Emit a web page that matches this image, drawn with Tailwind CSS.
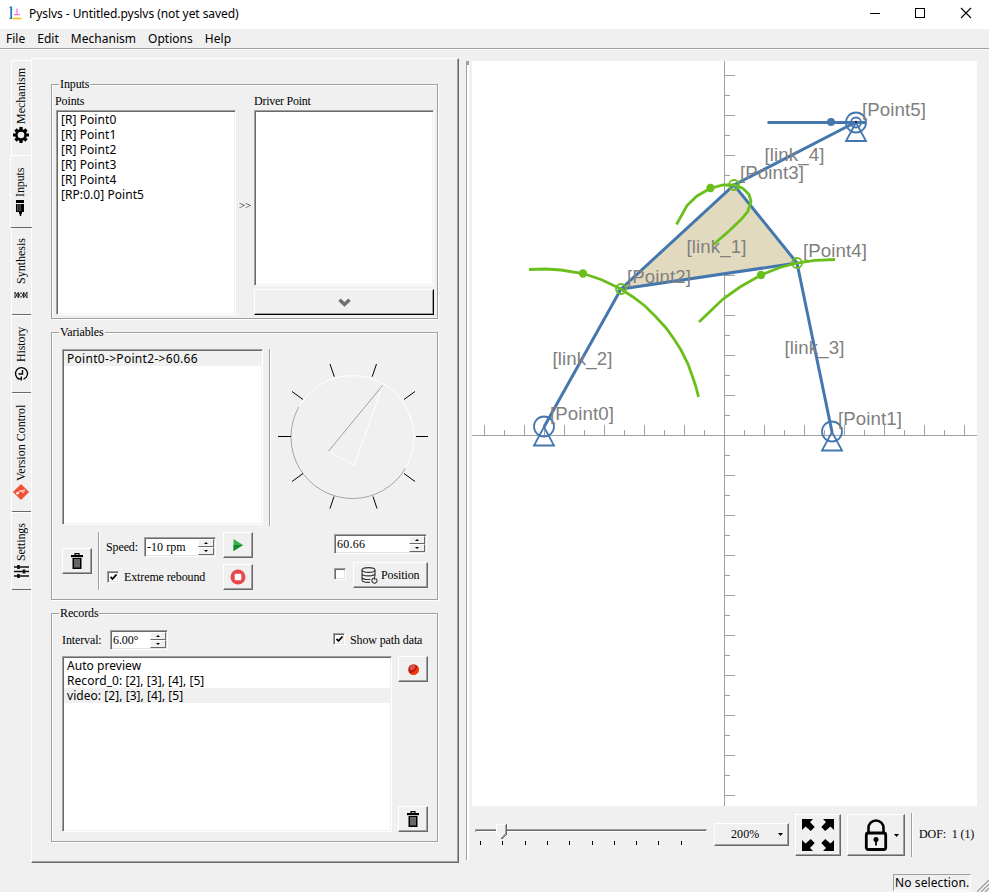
<!DOCTYPE html>
<html lang="en">
<head>
<meta charset="utf-8">
<title>Pyslvs</title>
<script src="https://cdn.jsdelivr.net/npm/@tailwindcss/browser@4"></script>
</head>
<body class="w-[989px] h-[892px] overflow-hidden bg-[#f0f0f0] text-black flex flex-col font-['Liberation_Serif',serif] text-[12px] leading-[15px] tracking-[-0.12px] whitespace-nowrap">

<!-- Title bar -->
<header class="h-[29px] shrink-0 bg-white flex items-center font-['Noto_Sans',sans-serif]">
  <svg class="ml-[9px] w-[13px] h-[14px] -mt-[3px]" viewBox="0 0 13 14"><path d="M2.200 .5V12" fill="none" stroke="#2a78c0" stroke-width="1.800"/><path d="M.5 1.300h1.500M.5 12.300h2.500" stroke="#2a78c0" stroke-width="1.200"/><path d="M3.500 12.500h8.800" stroke="#f2c418" stroke-width="1.800"/><path d="M8 2.500v6M5 8.700h6" stroke="#f070e8" stroke-width="1.200" fill="none"/></svg>
  <span class="ml-[7px] -mt-[2px] text-[12px] tracking-[-0.06px]">Pyslvs - Untitled.pyslvs (not yet saved)</span>
  <svg class="ml-auto mr-[17px] w-[102px] h-[12px] -mt-[3px]" viewBox="0 0 102 12" fill="none" stroke="#000"><path d="M0 6.500h10" shape-rendering="crispEdges"/><rect x="45.500" y="1.500" width="9" height="9" shape-rendering="crispEdges"/><path d="M91 1l10 10M101 1l-10 10" stroke-width="1.100"/></svg>
</header>

<!-- Menu bar -->
<nav class="h-[21px] shrink-0 border-b border-white shadow-[inset_0_-1px_0_#a0a0a0] flex items-center pb-[1px] pl-[6px] gap-[12px] font-['Noto_Sans',sans-serif] text-[12px] tracking-[0.02px]">
  <span>File</span><span>Edit</span><span>Mechanism</span><span>Options</span><span>Help</span>
</nav>

<main class="h-[818px] shrink-0 flex">
  <!-- Vertical tabs -->
  <div class="w-[31px] pt-[10px] pl-[10px] flex flex-col">
    <div class="ml-[1px] h-[95px] w-[21px] border-t border-l border-white rounded-tl-[2px] pt-[9px] pr-[2px] flex flex-col items-center">
      <span class="[writing-mode:vertical-rl] rotate-180 h-[54px] tracking-[0px]">Mechanism</span>
      <svg class="mt-[3px] w-[16px] h-[16px]" viewBox="-8 -8 16 16"><circle r="4.600" fill="none" stroke="#000" stroke-width="2.600"/><g stroke="#000" stroke-width="3.200"><path d="M0-8v3M0 8v-3M-8 0h3M8 0h-3M-5.500-5.500l2 2M5.500 5.500l-2-2M-5.500 5.500l2-2M5.500-5.500l-2 2"/></g></svg>
    </div>
    <div class="h-[73px] w-[22px] border-t border-l border-white border-b border-b-[#696969] rounded-l-[2px] pt-[11px] pr-[2px] flex flex-col items-center relative">
      <span class="[writing-mode:vertical-rl] rotate-180 h-[30px]">Inputs</span>
      <svg class="mt-[3px] mr-[1px] w-[8px] h-[16px]" viewBox="0 0 8 16"><path d="M0 0h8v3H0zM0 4h8v8H6v2H3v-2H0z"/><path d="M4.500 13v3" stroke="#000" stroke-width="1.500"/><path d="M1.800 4v7M4 4v7" stroke="#999" stroke-width=".8"/></svg>
    </div>
    <div class="ml-[1px] h-[87px] w-[21px] border-l border-white border-b border-b-[#696969] rounded-l-[2px] pt-[12px] pr-[2px] flex flex-col items-center">
      <span class="[writing-mode:vertical-rl] rotate-180 h-[44px] tracking-[0px]">Synthesis</span>
      <svg class="mt-[7px] w-[14px] h-[8px]" viewBox="0 0 14 8" fill="none" stroke="#333"><path d="M1 1v6l3.500-6v6L1 1M5 4l2-2.500L9 4 7 6.500zM9.500 1v6L13 1v6L9.500 1" stroke-width="1"/></svg>
    </div>
    <div class="ml-[1px] h-[78px] w-[21px] border-t border-l border-white border-b border-b-[#696969] rounded-l-[2px] pt-[11px] pr-[2px] flex flex-col items-center">
      <span class="[writing-mode:vertical-rl] rotate-180 h-[35px]">History</span>
      <svg class="mt-[4px] w-[15px] h-[15px]" viewBox="0 0 15 15" fill="none" stroke="#000"><path d="M5 13A6 6 0 1 1 9.500 13.200" stroke-width="1.300"/><path d="M3.500 12.800h4.500M7.300 10.500v4" stroke-width="1.300"/><path d="M8.500 4v4h-4" stroke-width="1.400"/></svg>
    </div>
    <div class="ml-[1px] h-[119px] w-[21px] border-t border-l border-white border-b border-b-[#696969] rounded-l-[2px] pt-[11px] pr-[2px] flex flex-col items-center">
      <span class="[writing-mode:vertical-rl] rotate-180 h-[76px] tracking-[0px]">Version Control</span>
      <svg class="mt-[3px] w-[16px] h-[16px]" viewBox="0 0 16 16"><path d="M8 0.500L15.500 8 8 15.500 0.500 8z" fill="#f05033" stroke="#f05033" stroke-linejoin="round"/><path d="M4 9.500L7.500 6.500h4M7.500 6.500L11 9" fill="none" stroke="#fbd0c8" stroke-width="1.100"/><circle cx="4.500" cy="9.300" r="1.200" fill="#fff"/><circle cx="11" cy="6.500" r="1.100" fill="#fbd0c8"/></svg>
    </div>
    <div class="ml-[1px] h-[78px] w-[21px] border-t border-l border-white border-b border-b-[#696969] rounded-l-[2px] pt-[11px] pr-[2px] flex flex-col items-center">
      <span class="[writing-mode:vertical-rl] rotate-180 h-[37px]">Settings</span>
      <svg class="mt-[3px] w-[15px] h-[15px]" viewBox="0 0 15 15" stroke="#111"><path d="M0 3h15M0 7.500h15M0 12h15" stroke-width="1.600"/><path d="M4.500 1v4M10 5.500v4M4.500 10v4" stroke-width="2.600"/></svg>
    </div>
  </div>

  <!-- Inputs page -->
  <section class="mt-[8px] w-[428px] h-[805px] border border-white border-r-[#696969] border-b-[#696969] shadow-[inset_-1px_-1px_0_#a0a0a0] pt-[25px] pl-[19px] flex flex-col gap-[13px]">

    <div class="relative w-[387px] h-[235px] border border-[#a0a0a0] shadow-[1px_1px_0_#fff,inset_1px_1px_0_#fff] pt-[8px] pl-[4px] flex">
      <span class="absolute -top-[8px] left-[7px] px-[1px] bg-[#f0f0f0] leading-[14px]">Inputs</span>
      <div class="w-[180px]">
        <div class="h-[17px] leading-[17px] -ml-px">Points</div>
        <div class="h-[205px] border border-[#a0a0a0] border-r-white border-b-white bg-white shadow-[inset_1px_1px_0_#696969,inset_-1px_-1px_0_#f0f0f0] pt-[1px] pl-[4px] font-['Noto_Sans',sans-serif] tracking-[0.06px]">
          <div>[R] Point0</div><div>[R] Point1</div><div>[R] Point2</div><div>[R] Point3</div><div>[R] Point4</div><div>[RP:0.0] Point5</div>
        </div>
      </div>
      <div class="w-[18px] pt-[105px] text-center text-[11px] tracking-[-0.3px]">&gt;&gt;</div>
      <div class="w-[180px]">
        <div class="h-[17px] leading-[17px] tracking-[-0.25px]">Driver Point</div>
        <div class="h-[176px] border border-[#a0a0a0] border-r-white border-b-white bg-white shadow-[inset_1px_1px_0_#696969,inset_-1px_-1px_0_#f0f0f0]"></div>
        <div class="mt-[3px] h-[26px] border border-white border-r-black border-b-black shadow-[inset_-1px_-1px_0_#a0a0a0] flex items-center justify-center">
          <svg class="w-[13px] h-[9px]" viewBox="0 0 13 9"><path d="M1.500 1.800l5 4.700 5-4.700" fill="none" stroke="#6e6e6e" stroke-width="3.400"/></svg>
        </div>
      </div>
    </div>

    <div class="relative w-[387px] h-[268px] border border-[#a0a0a0] shadow-[1px_1px_0_#fff,inset_1px_1px_0_#fff] pt-[16px] pl-[10px] flex flex-col">
      <span class="absolute -top-[8px] left-[7px] px-[1px] bg-[#f0f0f0] leading-[14px]">Variables</span>
      <div class="flex h-[177px]">
        <div class="w-[201px] h-[176px] border border-[#a0a0a0] border-r-white border-b-white bg-white shadow-[inset_1px_1px_0_#696969,inset_-1px_-1px_0_#f0f0f0] pt-[1px] px-[1px] font-['Noto_Sans',sans-serif] tracking-[0.3px]">
          <div class="bg-[#f0f0f0] pl-[3px]">Point0-&gt;Point2-&gt;60.66</div>
        </div>
        <div class="ml-[6px] w-[2px] border-l border-[#a0a0a0] bg-white"></div>
        <svg class="ml-[1px] mt-[7px] w-[160px] h-[160px]" viewBox="272 356 160 160" fill="none">
          <circle cx="352.500" cy="437" r="61.500" stroke="#fff"/>
          <path d="M298.800 407A61.500 61.500 0 0 0 352.500 498.500A61.500 61.500 0 0 0 405.400 468.300" stroke="#a0a0a0"/>
          <path d="M328.500 451.200L354.300 465.200L382.700 385.300" stroke="#fff"/>
          <path d="M382.700 385.300L328.500 451.200" stroke="#a0a0a0"/>
          <path d="M278 436.500h13M416 436.500h12M330 364l4.300 12.700M376.500 364l-4.300 12.700M292 391.500l11 8M415 391.500l-11 8M292 481.500l11-8M415 481.500l-11-8M330 508.500l4-12M377 508.500l-4-12" stroke="#000"/>
        </svg>
      </div>
      <div class="mt-[6px] h-[58px] flex">
        <div class="mt-[16px] w-[30px] h-[26px] border border-white border-r-[#696969] border-b-[#696969] shadow-[inset_-1px_-1px_0_#a0a0a0] flex items-center justify-center">
          <svg class="w-[12px] h-[16px]" viewBox="0 0 12 16"><path d="M4 2V.7h4V2" fill="none" stroke="#000" stroke-width="1.200"/><path d="M0 2h12v2.200H0z"/><path d="M1.500 5h9v11h-9z"/><path d="M4 6v8.500M6 6v8.500M8 6v8.500" stroke="#ccc" stroke-width="1"/></svg>
        </div>
        <div class="ml-[6px] w-[2px] border-l border-[#a0a0a0] bg-white"></div>
        <div class="ml-[6px] w-[147px] flex flex-col gap-[6px]">
          <div class="h-[26px] flex">
            <span class="mt-[8px] w-[38px]">Speed:</span>
            <div class="mt-[5px] w-[72px] h-[20px] border border-[#a0a0a0] border-r-white border-b-white bg-white shadow-[inset_1px_1px_0_#696969,inset_-1px_-1px_0_#e3e3e3] p-[1px] pl-[2px] flex justify-between">
              <span class="pt-[1px] tracking-[0.05px]">-10 rpm</span>
              <div class="w-[16px] flex flex-col">
                <div class="h-[8px] bg-[#f0f0f0] border border-white border-r-[#696969] border-b-[#696969] flex items-center justify-center"><svg class="w-[4px] h-[2px]" viewBox="0 0 4 2"><path d="M2 0l2 2H0z"/></svg></div>
                <div class="h-[8px] bg-[#f0f0f0] border border-white border-r-[#696969] border-b-[#696969] flex items-center justify-center"><svg class="w-[4px] h-[2px]" viewBox="0 0 4 2"><path d="M2 2l2-2H0z"/></svg></div>
              </div>
            </div>
            <div class="ml-[7px] w-[30px] h-[26px] border border-white border-r-[#696969] border-b-[#696969] shadow-[inset_-1px_-1px_0_#a0a0a0] flex items-center justify-center">
              <svg class="w-[10px] h-[12px]" viewBox="0 0 10 12"><path d="M.5 0L10 6 .5 12z" fill="#37b24a"/><path d="M.5 6H10L.5 12z" fill="#158a2c"/></svg>
            </div>
          </div>
          <div class="h-[26px] flex">
            <div class="ml-[1px] mt-[7px] w-[12px] h-[12px] border border-[#a0a0a0] border-r-white border-b-white bg-white shadow-[inset_1px_1px_0_#696969,inset_-1px_-1px_0_#e3e3e3] flex items-center justify-center"><svg class="w-[7px] h-[7px]" viewBox="0 0 7 7"><path d="M.5 3l2 2 4-4.500" fill="none" stroke="#000" stroke-width="1.800"/></svg></div>
            <span class="ml-[5px] mt-[6px] w-[99px]">Extreme rebound</span>
            <div class="w-[30px] h-[26px] border border-white border-r-[#696969] border-b-[#696969] shadow-[inset_-1px_-1px_0_#a0a0a0] flex items-center justify-center">
              <svg class="w-[16px] h-[16px]" viewBox="0 0 16 16"><circle cx="8" cy="8" r="7.500" fill="#e8484a"/><rect x="4.700" y="4.700" width="6.600" height="6.600" rx="1" fill="#fff"/></svg>
            </div>
          </div>
        </div>
        <div class="ml-[81px] w-[94px] flex flex-col">
          <div class="mt-[2px] w-[93px] h-[20px] border border-[#a0a0a0] border-r-white border-b-white bg-white shadow-[inset_1px_1px_0_#696969,inset_-1px_-1px_0_#e3e3e3] p-[1px] pl-[2px] flex justify-between">
            <span class="pt-[1px] tracking-[0.25px]">60.66</span>
            <div class="w-[16px] flex flex-col">
              <div class="h-[8px] bg-[#f0f0f0] border border-white border-r-[#696969] border-b-[#696969] flex items-center justify-center"><svg class="w-[4px] h-[2px]" viewBox="0 0 4 2"><path d="M2 0l2 2H0z"/></svg></div>
              <div class="h-[8px] bg-[#f0f0f0] border border-white border-r-[#696969] border-b-[#696969] flex items-center justify-center"><svg class="w-[4px] h-[2px]" viewBox="0 0 4 2"><path d="M2 2l2-2H0z"/></svg></div>
            </div>
          </div>
          <div class="mt-[8px] flex">
            <div class="mt-[6px] w-[12px] h-[12px] border border-[#a0a0a0] border-r-white border-b-white bg-white shadow-[inset_1px_1px_0_#696969,inset_-1px_-1px_0_#e3e3e3]"></div>
            <div class="ml-[7px] w-[75px] h-[26px] border border-white border-r-[#696969] border-b-[#696969] shadow-[inset_-1px_-1px_0_#a0a0a0] flex items-center pl-[7px]">
              <svg class="w-[17px] h-[17px]" viewBox="0 0 17 17" fill="none" stroke="#333" stroke-width="1.100"><ellipse cx="7.500" cy="3" rx="6.500" ry="2.400"/><path d="M1 3v10c0 1.800 3.500 2.700 8 2.300M14 3v6.500M1 6.500c0 3.200 13 3.200 13 0M1 10c0 2.500 5 3 8.500 2.200"/><path d="M15.800 12.500a2.600 2.600 0 1 1-2-1.500M13.500 9.500v2.500h2.500"/></svg>
              <span class="ml-[3px]">Position</span>
            </div>
          </div>
        </div>
      </div>
    </div>

    <div class="relative w-[387px] h-[229px] border border-[#a0a0a0] shadow-[1px_1px_0_#fff,inset_1px_1px_0_#fff] pt-[16px] pl-[10px] flex flex-col">
      <span class="absolute -top-[8px] left-[7px] px-[1px] bg-[#f0f0f0] leading-[14px]">Records</span>
      <div class="flex h-[20px]">
        <span class="mt-[3px] w-[48px]">Interval:</span>
        <div class="w-[58px] h-[20px] border border-[#a0a0a0] border-r-white border-b-white bg-white shadow-[inset_1px_1px_0_#696969,inset_-1px_-1px_0_#e3e3e3] p-[1px] pl-[2px] flex justify-between">
          <span class="pt-[1px]">6.00°</span>
          <div class="w-[16px] flex flex-col">
            <div class="h-[8px] bg-[#f0f0f0] border border-white border-r-[#696969] border-b-[#696969] flex items-center justify-center"><svg class="w-[4px] h-[2px]" viewBox="0 0 4 2"><path d="M2 0l2 2H0z"/></svg></div>
            <div class="h-[8px] bg-[#f0f0f0] border border-white border-r-[#696969] border-b-[#696969] flex items-center justify-center"><svg class="w-[4px] h-[2px]" viewBox="0 0 4 2"><path d="M2 2l2-2H0z"/></svg></div>
          </div>
        </div>
        <div class="ml-[165px] mt-[3px] w-[12px] h-[12px] border border-[#a0a0a0] border-r-white border-b-white bg-white shadow-[inset_1px_1px_0_#696969,inset_-1px_-1px_0_#e3e3e3] flex items-center justify-center"><svg class="w-[7px] h-[7px]" viewBox="0 0 7 7"><path d="M.5 3l2 2 4-4.500" fill="none" stroke="#000" stroke-width="1.800"/></svg></div>
        <span class="ml-[5px] mt-[3px]">Show path data</span>
      </div>
      <div class="mt-[6px] flex">
        <div class="w-[330px] h-[176px] border border-[#a0a0a0] border-r-white border-b-white bg-white shadow-[inset_1px_1px_0_#696969,inset_-1px_-1px_0_#f0f0f0] pt-[1px] px-[1px] font-['Noto_Sans',sans-serif] tracking-[0.05px]">
          <div class="pl-[3px]">Auto preview</div>
          <div class="pl-[3px]">Record_0: [2], [3], [4], [5]</div>
          <div class="pl-[3px] bg-[#f0f0f0]">video: [2], [3], [4], [5]</div>
        </div>
        <div class="ml-[6px] w-[30px] flex flex-col justify-between">
          <div class="h-[26px] border border-white border-r-[#696969] border-b-[#696969] shadow-[inset_-1px_-1px_0_#a0a0a0] flex items-center justify-center">
            <svg class="w-[11px] h-[11px]" viewBox="0 0 11 11"><circle cx="5.500" cy="5.500" r="5.300" fill="#c41a10"/><path d="M10.800 5.500A5.300 5.300 0 0 1 2 9.500C6 8.500 9 6 9.500 2a5.300 5.300 0 0 1 1.300 3.500" fill="#f23c08"/><ellipse cx="4.500" cy="3.500" rx="3" ry="2" fill="#d8584c" transform="rotate(-35 4.500 3.500)"/></svg>
          </div>
          <div class="h-[26px] border border-white border-r-[#696969] border-b-[#696969] shadow-[inset_-1px_-1px_0_#a0a0a0] flex items-center justify-center">
            <svg class="w-[12px] h-[16px]" viewBox="0 0 12 16"><path d="M4 2V.7h4V2" fill="none" stroke="#000" stroke-width="1.200"/><path d="M0 2h12v2.200H0z"/><path d="M1.500 5h9v11h-9z"/><path d="M4 6v8.500M6 6v8.500M8 6v8.500" stroke="#ccc" stroke-width="1"/></svg>
          </div>
        </div>
      </div>
    </div>
  </section>

  <!-- Splitter handle -->
  <div class="ml-[7px] mt-[11px] w-[3px] h-[799px] border-l border-[#a0a0a0] bg-white"><div class="h-[4px] bg-[#a0a0a0]"></div></div>

  <!-- Canvas and view controls -->
  <section class="ml-[3px] mt-[11px] w-[517px]">
    <svg class="block w-[505px] h-[745px] bg-white tracking-normal" viewBox="472 61 505 745" fill="none">
      <g stroke="#a0a0a0" shape-rendering="crispEdges">
        <path d="M472 435.500H977M724.500 61V806"/>
        <path d="M484.500 425v10M524.500 425v10M564.500 425v10M604.500 425v10M644.500 425v10M684.500 425v10M764.500 425v10M804.500 425v10M844.500 425v10M884.500 425v10M924.500 425v10M964.500 425v10"/>
        <path d="M504.500 430v5M544.500 430v5M584.500 430v5M624.500 430v5M664.500 430v5M704.500 430v5M744.500 430v5M784.500 430v5M824.500 430v5M864.500 430v5M904.500 430v5M944.500 430v5"/>
        <path d="M725 75.500h10M725 115.500h10M725 155.500h10M725 195.500h10M725 235.500h10M725 275.500h10M725 315.500h10M725 355.500h10M725 395.500h10M725 475.500h10M725 515.500h10M725 555.500h10M725 595.500h10M725 635.500h10M725 675.500h10M725 715.500h10M725 755.500h10M725 795.500h10"/>
        <path d="M725 95.500h5M725 135.500h5M725 175.500h5M725 215.500h5M725 255.500h5M725 295.500h5M725 335.500h5M725 375.500h5M725 415.500h5M725 455.500h5M725 495.500h5M725 535.500h5M725 575.500h5M725 615.500h5M725 655.500h5M725 695.500h5M725 735.500h5M725 775.500h5"/>
      </g>
      <g stroke="#4477ae" stroke-width="3">
        <path d="M734 185L797 263L621 289z" fill="#e2dabe"/>
        <path d="M544 427L621 289M797 263L832 432M734 185L856 122M767.500 122.500H866"/>
      </g>
      <g stroke="#4477ae" stroke-width="1.800">
        <circle cx="544" cy="426.500" r="10"/><path d="M544 427l-10 18.500h20z"/>
        <circle cx="832" cy="431.500" r="10"/><path d="M832 432l-10 18.500h20z"/>
        <circle cx="856" cy="122.500" r="10"/><circle cx="856" cy="122.500" r="5"/><path d="M856 122.500l-10 18.500h20z"/>
      </g>
      <circle cx="831" cy="122" r="4" fill="#4477ae"/><rect x="855" y="121" width="2" height="2" fill="#222"/>
      <g fill="#808080" font-family="Liberation Sans, Arial, sans-serif" font-size="18.670" letter-spacing="0.100">
        <text x="686.500" y="253">[link_1]</text><text x="552.500" y="365">[link_2]</text><text x="784.500" y="354">[link_3]</text><text x="764.500" y="161">[link_4]</text>
        <text x="550" y="420">[Point0]</text><text x="838" y="425">[Point1]</text><text x="627" y="283">[Point2]</text><text x="740" y="179">[Point3]</text><text x="803" y="257">[Point4]</text><text x="862" y="116">[Point5]</text>
      </g>
      <g stroke="#6bbf1c" stroke-width="2.800">
        <path d="M529 269.500L546 269L561 270L583 273.500L601 279.500L621 289L633 297L645 306L656 317L666 328L674 339L681 350L688 364L693 378L696 387L698.500 397"/>
        <path d="M676.500 224.500L687 205.500L697 196L710 188.500L723 185L734 185L743 188.500L749 194.500L751 201L748 211L742 218.500L729 231L713.500 244.500"/>
        <path d="M699 322L723 299L740 287L761 275L780 267.500L797 263L815 260.300L835 259.500"/>
        <g stroke-width="1.800"><circle cx="621" cy="289" r="5"/><circle cx="734" cy="185" r="5"/><circle cx="797" cy="263" r="5"/></g>
      </g>
      <g fill="#6bbf1c"><circle cx="583" cy="273.500" r="4.200"/><circle cx="710.500" cy="188" r="4.200"/><circle cx="761" cy="275" r="4.200"/></g>
    </svg>
    <div class="h-[62px] flex pt-[7px] pl-[3px]">
      <svg class="mt-[9px] w-[233px] h-[25px]" viewBox="475 822 233 25" shape-rendering="crispEdges">
        <path d="M475 829.500h232" stroke="#a0a0a0"/><path d="M476 830.500h230" stroke="#696969"/><path d="M475 831.500h232" stroke="#fff"/><path d="M475.500 829v3" stroke="#a0a0a0"/>
        <path d="M480.500 841v4M502.500 841v4M525.500 841v4M547.500 841v4M569.500 841v4M592.500 841v4M614.500 841v4M636.500 841v4M658.500 841v4M681.500 841v4" stroke="#000"/>
        <path d="M496 824h11v10l-5 5h-1l-5-5z" fill="#f0f0f0"/><path d="M501.500 838.500l-5-5v-9h9" fill="none" stroke="#fff"/><path d="M506.500 824v10l-5 5" fill="none" stroke="#696969"/><path d="M505.500 825v9l-4 4" fill="none" stroke="#a0a0a0"/>
      </svg>
      <div class="ml-[6px] mt-[10px] w-[75px] h-[23px] border border-white border-r-[#696969] border-b-[#696969] shadow-[inset_-1px_-1px_0_#a0a0a0] flex items-center">
        <span class="ml-[16px] w-[47px] tracking-[0.1px]">200%</span><svg class="w-[5px] h-[3px]" viewBox="0 0 5 3"><path d="M0 0h5L2.500 3z"/></svg>
      </div>
      <div class="ml-[6px] mt-[1px] w-[46px] h-[42px] border border-white border-r-[#696969] border-b-[#696969] shadow-[inset_-1px_-1px_0_#a0a0a0] flex items-center justify-center">
        <svg class="w-[32px] h-[32px]" viewBox="0 0 32 32"><path d="M0 0h11L8 3 12.700 8 8.800 12 3.500 7.500 0 11z"/><path d="M32 0H21l3 3-4.700 5 3.900 4 5.300-4.500L32 11z"/><path d="M0 32h11l-3-3 4.700-5-3.900-4-5.300 4.500L0 21z"/><path d="M32 32H21l3-3-4.700-5 3.900-4 5.300 4.500L32 21z"/></svg>
      </div>
      <div class="ml-[6px] mt-[1px] w-[58px] h-[42px] border border-white border-r-[#696969] border-b-[#696969] shadow-[inset_-1px_-1px_0_#a0a0a0] flex items-center pl-[16px]">
        <svg class="-mt-[1px] w-[24px] h-[32px]" viewBox="0 0 24 32" fill="none" stroke="#000"><rect x="2.300" y="14" width="19.400" height="16.500" rx="2" stroke-width="2.800"/><path d="M4.500 13V9a7.500 7.500 0 0 1 15 0v4" stroke-width="2.600"/><circle cx="12" cy="20.500" r="2.500" fill="#000" stroke="none"/><path d="M12 21v5.500" stroke-width="1.800"/></svg>
        <svg class="ml-[6px] w-[5px] h-[3px]" viewBox="0 0 5 3"><path d="M0 0h5L2.500 3z"/></svg>
      </div>
      <div class="ml-[6px] w-[2px] h-[44px] border-l border-[#a0a0a0] bg-white"></div>
      <span class="ml-[6px] mt-[14px] tracking-[-0.1px] whitespace-pre">DOF:  1 (1)</span>
    </div>
  </section>
</main>

<!-- Status bar -->
<footer class="h-[24px] flex justify-end">
  <div class="mt-[6px] h-[17px] w-[78px] border border-[#a0a0a0] border-r-white border-b-white pl-[1px] leading-[16px] text-[12px] tracking-[0.1px] font-['Noto_Sans',sans-serif]">No selection.</div>
  <svg class="ml-[6px] mt-[12px] w-[12px] h-[12px]" viewBox="0 0 12 12" stroke="#a0a0a0" stroke-width="1.400"><path d="M0 12L12 0M4 12l8-8M8 12l4-4"/><path d="M2 12L12 2M6 12l6-6" stroke="#fff" stroke-width="1"/></svg>
</footer>
</body>
</html>
